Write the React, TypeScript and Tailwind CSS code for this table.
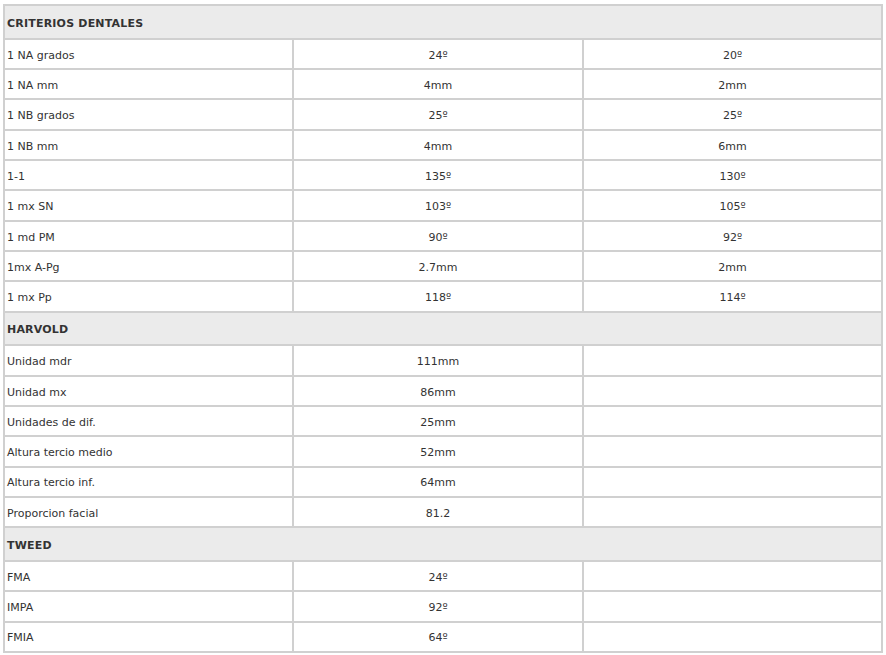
import React from "react";

type Row = { type: "h"; label: string } | { type: "d"; cells: [string, string, string] };

const rows: Row[] = [
  { type: "h", label: "CRITERIOS DENTALES" },
  { type: "d", cells: ["1 NA grados", "24º", "20º"] },
  { type: "d", cells: ["1 NA mm", "4mm", "2mm"] },
  { type: "d", cells: ["1 NB grados", "25º", "25º"] },
  { type: "d", cells: ["1 NB mm", "4mm", "6mm"] },
  { type: "d", cells: ["1-1", "135º", "130º"] },
  { type: "d", cells: ["1 mx SN", "103º", "105º"] },
  { type: "d", cells: ["1 md PM", "90º", "92º"] },
  { type: "d", cells: ["1mx A-Pg", "2.7mm", "2mm"] },
  { type: "d", cells: ["1 mx Pp", "118º", "114º"] },
  { type: "h", label: "HARVOLD" },
  { type: "d", cells: ["Unidad mdr", "111mm", ""] },
  { type: "d", cells: ["Unidad mx", "86mm", ""] },
  { type: "d", cells: ["Unidades de dif.", "25mm", ""] },
  { type: "d", cells: ["Altura tercio medio", "52mm", ""] },
  { type: "d", cells: ["Altura tercio inf.", "64mm", ""] },
  { type: "d", cells: ["Proporcion facial", "81.2", ""] },
  { type: "h", label: "TWEED" },
  { type: "d", cells: ["FMA", "24º", ""] },
  { type: "d", cells: ["IMPA", "92º", ""] },
  { type: "d", cells: ["FMIA", "64º", ""] },
];

export default function App() {
  return (
    <div className="w-[886px] h-[655px] bg-white pt-[4px] pl-[3px]" style={{ fontFamily: '"DejaVu Sans", Verdana, sans-serif' }}>
      <div className="w-[880px] border-l-2 border-t-2 border-[#d0d0d0] text-[11px] text-[#333]">
        {rows.map((r, i) =>
          r.type === "h" ? (
            <div key={i} className="h-[33.67px] flex items-center bg-[#ebebeb] border-r-2 border-b-2 border-[#d0d0d0] pl-[2px] pt-[4px] font-bold tracking-[0.2px]">
              {r.label}
            </div>
          ) : (
            <div key={i} className="h-[30.33px] flex">
              <div className="w-[289px] flex items-center pl-[2px] pt-[4px] border-r-2 border-b-2 border-[#d0d0d0]">{r.cells[0]}</div>
              <div className="w-[290px] flex items-center justify-center pt-[4px] border-r-2 border-b-2 border-[#d0d0d0]">{r.cells[1]}</div>
              <div className="flex-1 flex items-center justify-center pt-[4px] border-r-2 border-b-2 border-[#d0d0d0]">{r.cells[2]}</div>
            </div>
          )
        )}
      </div>
    </div>
  );
}
